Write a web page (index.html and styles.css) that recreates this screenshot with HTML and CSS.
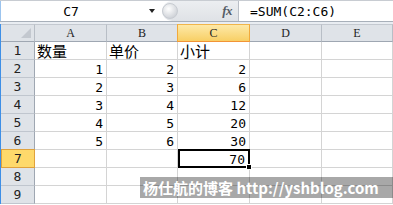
FILE: index.html
```html
<!DOCTYPE html>
<html>
<head>
<meta charset="utf-8">
<link rel="stylesheet" href="styles.css">
</head>
<body>
<div class="sheet">
  <div class="fbar">
    <div class="namebox"><span class="nb-text">C7</span><span class="nb-arrow"></span></div>
    <div class="fxzone"><span class="grip"></span><span class="fx">fx</span></div>
    <div class="formula">=SUM(C2:C6)</div>
  </div>
  <div class="sep"></div>
  <div class="grid">
    <div class="corner"><span class="tri"></span></div>
    <div class="ch">A</div><div class="ch">B</div><div class="ch sel">C</div><div class="ch">D</div><div class="ch">E</div>

    <div class="rh">1</div><div class="c txt">数量</div><div class="c txt">单价</div><div class="c txt">小计</div><div class="c"></div><div class="c"></div>
    <div class="rh">2</div><div class="c num">1</div><div class="c num">2</div><div class="c num">2</div><div class="c"></div><div class="c"></div>
    <div class="rh">3</div><div class="c num">2</div><div class="c num">3</div><div class="c num">6</div><div class="c"></div><div class="c"></div>
    <div class="rh">4</div><div class="c num">3</div><div class="c num">4</div><div class="c num">12</div><div class="c"></div><div class="c"></div>
    <div class="rh">5</div><div class="c num">4</div><div class="c num">5</div><div class="c num">20</div><div class="c"></div><div class="c"></div>
    <div class="rh">6</div><div class="c num">5</div><div class="c num">6</div><div class="c num">30</div><div class="c"></div><div class="c"></div>
    <div class="rh sel">7</div><div class="c"></div><div class="c"></div><div class="c num active">70<span class="handle"></span></div><div class="c"></div><div class="c"></div>
    <div class="rh">8</div><div class="c"></div><div class="c"></div><div class="c"></div><div class="c"></div><div class="c"></div>
    <div class="rh">9</div><div class="c"></div><div class="c"></div><div class="c"></div><div class="c"></div><div class="c"></div>
  </div>
  <div class="watermark">杨仕航的博客 http://yshblog.com</div>
</div>
</body>
</html>
```
FILE: styles.css
```css
html, body {
  margin: 0;
  padding: 0;
  background: #ffffff;
  overflow: hidden;
}
.sheet {
  position: relative;
  width: 393px;
  height: 205px;
  overflow: hidden;
}
.fbar {
  display: flex;
  border-top: 1px solid #c8ccd2;
  border-bottom: 1px solid #a8b0ba;
  box-sizing: border-box;
  height: 22px;
  background: #ffffff;
}
.namebox {
  width: 161px;
  display: flex;
  align-items: center;
  background: #fff;
  border-left: 1px solid #9cc4ee;
}
.nb-text {
  width: 140px;
  text-align: center;
  font-family: "DejaVu Sans Mono", "Liberation Mono", monospace;
  font-size: 13px;
  color: #000;
}
.nb-arrow {
  margin-left: 8px;
  width: 0;
  height: 0;
  border-left: 3px solid transparent;
  border-right: 3px solid transparent;
  border-top: 4px solid #222;
}
.fxzone {
  width: 77px;
  display: flex;
  align-items: center;
  justify-content: space-between;
  background: linear-gradient(#eceef1, #dfe2e6);
  border-radius: 10px 0 0 10px;
  box-sizing: border-box;
  padding: 0 6px 0 0;
  border-right: 1px solid #b9bec6;
}
.grip {
  width: 14px;
  height: 14px;
  border-radius: 50%;
  background: radial-gradient(circle at 40% 35%, #ffffff, #d3d6db 70%, #bfc3c9);
  border: 1px solid #c7cbd1;
}
.fx {
  font-family: "Liberation Serif", serif;
  font-style: italic;
  font-weight: bold;
  font-size: 13px;
  color: #555c66;
  letter-spacing: -0.5px;
}
.formula {
  flex: 1;
  display: flex;
  align-items: center;
  padding-left: 11px;
  font-family: "DejaVu Sans Mono", "Liberation Mono", monospace;
  font-size: 13px;
  color: #000;
  background: #fff;
}
.sep {
  height: 2px;
  background: #e9edf2;
}
.grid {
  display: grid;
  grid-template-columns: 34px 72px 71px 72px 72px 1fr;
  grid-auto-rows: 18px;
  border-left: 1px solid #3e8fe6;
}
.grid > div {
  box-sizing: border-box;
}
.corner {
  position: relative;
  background: #dfe3e8;
  border-top: 1px solid #c4c9d0;
  border-right: 1px solid #b8bec6;
  border-bottom: 1px solid #9fa7b2;
}
.tri {
  position: absolute;
  right: 3px;
  bottom: 3px;
  width: 0;
  height: 0;
  border-left: 10px solid transparent;
  border-bottom: 10px solid #c3c8cf;
}
.ch {
  background: #dfe3e8;
  border-top: 1px solid #c4c9d0;
  border-right: 1px solid #b8bec6;
  border-bottom: 1px solid #9fa7b2;
  display: flex;
  align-items: center;
  justify-content: center;
  font-family: "Liberation Serif", serif;
  font-size: 12px;
  color: #222;
}
.ch.sel {
  background: linear-gradient(#fde9a8, #f8cf65);
  border-top-color: #f0b54a;
  border-right: 1px solid #f2a93b;
  border-left: 1px solid #f2a93b;
  border-bottom: 1px solid #f29436;
  margin-left: -1px;
}
.rh {
  background: #dfe3e8;
  border-right: 1px solid #9fa7b2;
  border-bottom: 1px solid #c0c6ce;
  display: flex;
  align-items: center;
  justify-content: center;
  font-family: "DejaVu Sans Mono", "Liberation Mono", monospace;
  font-size: 13px;
  color: #222;
}
.rh.sel {
  background: #fed96b;
  border: 1px solid #e0a23c;
  margin-top: -1px;
  height: 19px;
}
.c {
  border-right: 1px solid #d4d4d4;
  border-bottom: 1px solid #d4d4d4;
  display: flex;
  align-items: center;
  font-size: 13px;
  color: #000;
}
.txt {
  font-family: "Noto Sans CJK SC", sans-serif;
  font-size: 15px;
  padding-left: 2px;
  line-height: 1;
}
.num {
  justify-content: flex-end;
  padding-right: 3px;
  font-family: "DejaVu Sans Mono", "Liberation Mono", monospace;
  padding-top: 2px;
}
.active {
  position: relative;
  padding-right: 4px;
}
.active::after {
  content: "";
  position: absolute;
  left: 0;
  top: -1px;
  right: -1px;
  bottom: -1px;
  border: 2px solid #000;
}
.handle {
  position: absolute;
  right: -3px;
  bottom: -3px;
  width: 4px;
  height: 4px;
  background: #000;
  border: 1px solid #fff;
  z-index: 2;
}
.watermark {
  position: absolute;
  left: 140px;
  top: 177px;
  width: 253px;
  height: 21px;
  background: rgba(0, 0, 0, 0.34);
  color: #fff;
  font-family: "Noto Sans CJK SC", "Liberation Sans", sans-serif;
  font-weight: bold;
  font-size: 15px;
  line-height: 21px;
  padding-left: 3px;
  box-sizing: border-box;
  white-space: nowrap;
}
```
